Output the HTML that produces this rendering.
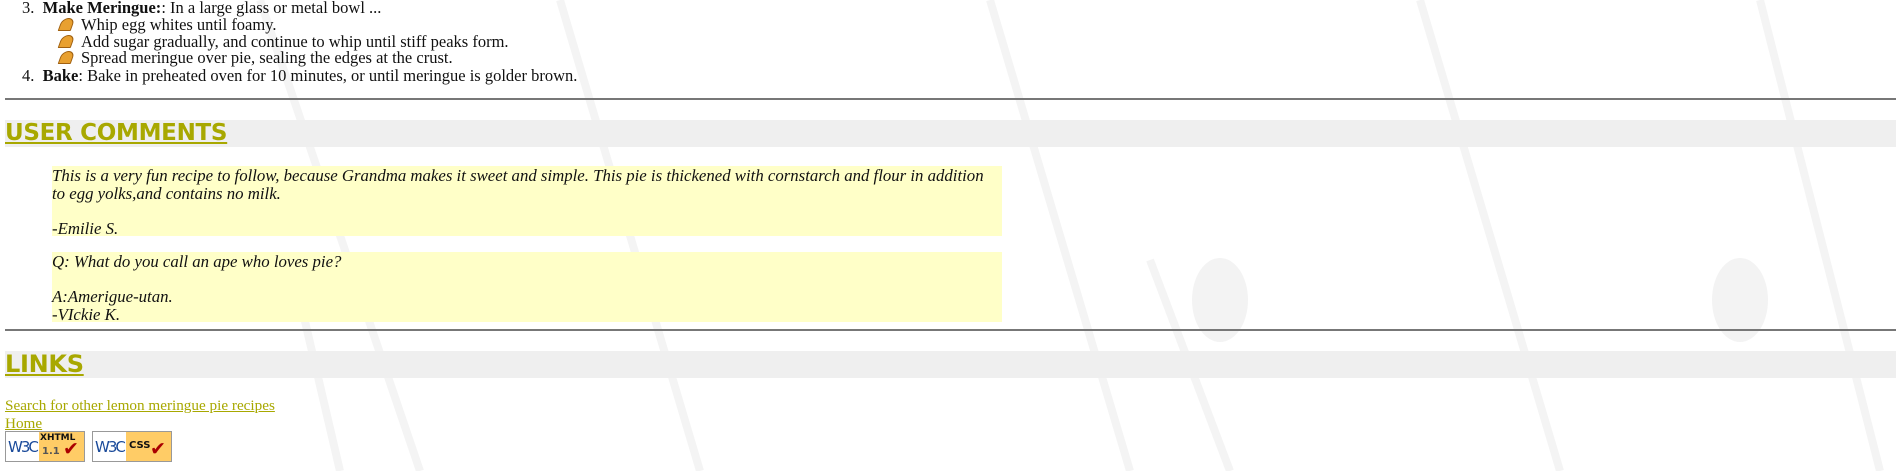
<!DOCTYPE html>
<html><head><meta charset="utf-8"><style>
html,body{margin:0;padding:0;width:1901px;height:471px;overflow:hidden;background:#fff;position:relative;font-family:"Liberation Serif",serif;font-size:16.5px;color:#111}
.a{position:absolute;white-space:nowrap;line-height:17px}
.hr{position:absolute;left:5px;right:5px;height:0;border-top:2px solid #777}
.band{position:absolute;left:5px;right:5px;height:27px;background:#efefef}
.h{position:absolute;left:5px;font-family:"DejaVu Sans",Verdana,sans-serif;font-weight:bold;font-size:23px;color:#a8a800;text-decoration:underline;line-height:27px;letter-spacing:-0.3px}
.box{position:absolute;left:52px;width:950px;background:#ffffc8;font-style:italic;font-size:16.8px;line-height:17.5px;padding-top:1px;white-space:nowrap}
.pie{display:inline-block;width:11px;height:11px;background:#e8a030;border:1px solid #a06010;border-radius:8px 8px 1px 1px;transform:skewX(-20deg);margin-right:8px;vertical-align:-1px}
a{color:#a8a800}
.badge{position:absolute;top:431px;width:80px;height:31px;box-sizing:border-box;border:1px solid #999;background:#fff;font-family:"DejaVu Sans",sans-serif}
</style></head><body>
<svg style="position:absolute;left:0;top:0" width="1901" height="471"><g stroke="#f4f4f4" stroke-width="8" fill="none">
<path d="M260 0 L420 471"/><path d="M560 0 L700 471"/><path d="M990 0 L1130 471"/><path d="M1420 0 L1560 471"/><path d="M1760 0 L1880 471"/>
<path d="M300 300 L340 471"/><path d="M1150 260 L1230 471"/></g>
<g fill="#f3f3f3"><ellipse cx="1220" cy="300" rx="28" ry="42"/><ellipse cx="1740" cy="300" rx="28" ry="42"/></g></svg>

<div class="a" style="left:22px;top:-1px">3.&nbsp; <b>Make Meringue:</b>: In a large glass or metal bowl ...</div>
<div class="a" style="left:60px;top:16px"><span class="pie"></span>Whip egg whites until foamy.</div>
<div class="a" style="left:60px;top:33px"><span class="pie"></span>Add sugar gradually, and continue to whip until stiff peaks form.</div>
<div class="a" style="left:60px;top:49px"><span class="pie"></span>Spread meringue over pie, sealing the edges at the crust.</div>
<div class="a" style="left:22px;top:67px">4.&nbsp; <b>Bake</b>: Bake in preheated oven for 10 minutes, or until meringue is golder brown.</div>

<div class="hr" style="top:98px"></div>
<div class="band" style="top:120px"></div>
<div class="h" style="top:120px">USER COMMENTS</div>

<div class="box" style="top:166px;height:69px">This is a very fun recipe to follow, because Grandma makes it sweet and simple. This pie is thickened with cornstarch and flour in addition<br>to egg yolks,and contains no milk.<br><br>-Emilie S.</div>
<div class="box" style="top:252px;height:69px">Q: What do you call an ape who loves pie?<br><br>A:Amerigue-utan.<br>-VIckie K.</div>

<div class="hr" style="top:329px"></div>
<div class="band" style="top:351px"></div>
<div class="h" style="top:351px;font-size:24px">LINKS</div>

<div class="a" style="left:5px;top:397px;font-size:15.2px"><a href="#">Search for other lemon meringue pie recipes</a></div>
<div class="a" style="left:5px;top:415px;font-size:15.2px"><a href="#">Home</a></div>

<div class="badge" style="left:5px"><span style="position:absolute;left:2px;top:6px;color:#1a4a9a;font-size:15px;letter-spacing:-2px">W3C</span><div style="position:absolute;left:33px;top:0;width:45px;height:29px;background:#fc6"><span style="position:absolute;left:1px;top:1px;font-size:9px;font-weight:bold">XHTML</span><span style="position:absolute;left:3px;top:14px;font-size:10px;font-weight:bold;color:#555">1.1</span><span style="position:absolute;left:24px;top:6px;color:#a00;font-size:19px;font-weight:bold">✔</span></div></div>
<div class="badge" style="left:92px"><span style="position:absolute;left:2px;top:6px;color:#1a4a9a;font-size:15px;letter-spacing:-2px">W3C</span><div style="position:absolute;left:33px;top:0;width:45px;height:29px;background:#fc6"><span style="position:absolute;left:3px;top:8px;font-size:10px;font-weight:bold">CSS</span><span style="position:absolute;left:24px;top:6px;color:#a00;font-size:19px;font-weight:bold">✔</span></div></div>
</body></html>
